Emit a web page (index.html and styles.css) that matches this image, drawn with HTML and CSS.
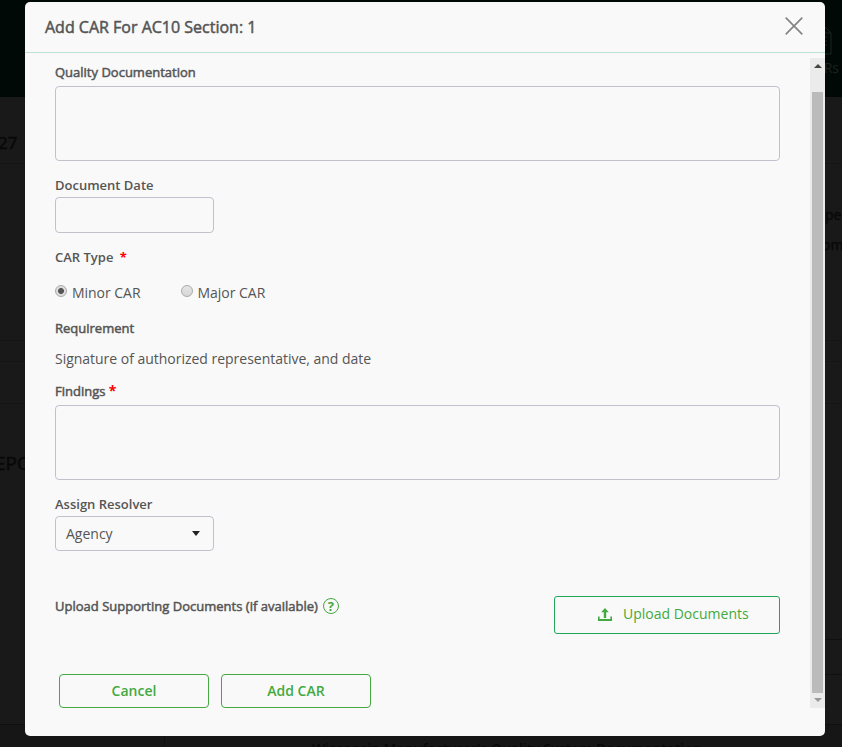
FILE: index.html
```html
<!DOCTYPE html>
<html lang="en">
<head>
<meta charset="utf-8">
<title>Add CAR</title>
<link rel="stylesheet" href="styles.css">
</head>
<body>
<div class="page">
  <header class="topbar">
    <svg class="doc-icon" width="26" height="32" viewBox="0 0 26 32"><path d="M1 1h15l9 9v21H1zM16 1v9h9M17 14h4M17 18h4M17 22h4"/></svg>
    <span class="nav-label">CARs</span>
  </header>
  <section class="strip strip-number"><span>27</span></section>
  <section class="strip strip-details"><span>pe</span><span>om</span></section>
  <section class="strip strip-gap"></section>
  <section class="strip strip-gap-wide"></section>
  <section class="strip strip-report"><span>EPO</span></section>
  <footer class="bottom"><div class="bottom-cell"></div><span>Wisconsin Manufacturer's Quality System Documentation</span></footer>
  <div class="side-lines"></div>
</div>
<div class="modal" role="dialog" aria-labelledby="title">
  <header class="modal-head">
    <h1 id="title" class="thick">Add CAR For AC10 Section: 1</h1>
    <svg class="close" width="18" height="18" viewBox="0 0 18 18"><path d="M.7.7l16.6 16.6M17.3.7L.7 17.3"/></svg>
  </header>
  <div class="modal-body">
    <form class="form">
      <div class="field">
        <label class="label thick">Quality Documentation</label>
        <div class="textarea"></div>
      </div>
      <div class="field field-date">
        <label class="label semi">Document Date</label>
        <div class="input"></div>
      </div>
      <div class="field field-type">
        <div class="label semi">CAR Type <b class="required">*</b></div>
        <div class="radios">
          <label class="option"><i class="radio checked"></i><span>Minor CAR</span></label>
          <label class="option"><i class="radio"></i><span>Major CAR</span></label>
        </div>
      </div>
      <div class="field field-requirement">
        <div class="label thick">Requirement</div>
        <p class="text">Signature of authorized representative, and date</p>
      </div>
      <div class="field field-findings">
        <label class="label thick">Findings <b class="required">*</b></label>
        <div class="textarea"></div>
      </div>
      <div class="field field-resolver">
        <label class="label semi">Assign Resolver</label>
        <div class="select"><span>Agency</span><i class="caret"></i></div>
      </div>
      <div class="upload-row">
        <div class="upload-label"><span class="thick">Upload Supporting Documents (if available)</span><i class="help">?</i></div>
        <div class="upload-button">
          <svg width="14" height="13" viewBox="0 0 14 13"><path d="M7 0l3.800 4.300H8.200V10H5.800V4.300H3.200zM0 8.500h1.600v2.500h10.800V8.500H14V13H0z"/></svg>
          <span>Upload Documents</span>
        </div>
      </div>
      <div class="actions">
        <div class="button">Cancel</div>
        <div class="button">Add CAR</div>
      </div>
    </form>
    <div class="scrollbar"><i class="arrow up"></i><div class="thumb"></div><i class="arrow down"></i></div>
  </div>
</div>
</body>
</html>
```
FILE: styles.css
```css
* { box-sizing: border-box; }
body {
  margin: 0;
  width: 842px;
  height: 747px;
  overflow: hidden;
  background: #191919;
  color: #555;
  font: 14px/20px "Open Sans", "Noto Sans", sans-serif;
}

/* dimmed page */
.page { height: 747px; overflow: hidden; color: #080808; position: relative; }
.topbar {
  height: 97px;
  padding: 23px 3px 0 0;
  background: #000906;
  display: flex;
  flex-direction: column;
  align-items: flex-end;
  gap: 3px;
  color: #1d2120;
}
.doc-icon { fill: none; stroke: #1d2522; margin-right: 7px; }
.nav-label { font-size: 14px; }
.strip { border-bottom: 1px solid #151515; overflow: hidden; }
.strip-number { height: 67px; padding-top: 35px; font-size: 17px; line-height: 22px; -webkit-text-stroke: .5px currentColor; }
.strip-number span { margin-left: -2px; }
.strip-details {
  height: 177px;
  padding: 41px 0 0 825px;
  display: flex;
  flex-direction: column;
  gap: 10px;
  -webkit-text-stroke: .4px currentColor;
}
.strip-details span:last-child { margin-left: -3px; }
.strip-gap { height: 21px; }
.strip-gap-wide { height: 42px; }
.strip-report {
  height: 321px;
  padding-top: 47px;
  border-color: #0f0f0f;
  font-size: 19px;
  line-height: 24px;
  -webkit-text-stroke: .5px currentColor;
}
.strip-report span { margin-left: -5px; }
.bottom { height: 22px; display: flex; background: #161616; overflow: hidden; font: 600 14px/20px "Open Sans", sans-serif; }
.bottom-cell { width: 165px; border-right: 1px solid #101010; flex: none; }
.bottom span { margin: 14px 0 0 147px; white-space: nowrap; }
.side-lines {
  position: absolute;
  left: 825px;
  top: 639px;
  width: 17px;
  height: 36px;
  border: solid #101010;
  border-width: 1px 0;
}

/* dialog */
.modal {
  position: absolute;
  left: 25px;
  top: 2px;
  width: 800px;
  height: 734px;
  border-radius: 5px;
  background: #f9f9f9;
  overflow: hidden;
}
.modal-head {
  height: 51px;
  padding: 0 22px 2px 20px;
  border-bottom: 1px solid #bcdfd7;
  display: flex;
  align-items: center;
  justify-content: space-between;
}
h1 { margin: 1px 0 0; padding-top: 1px; font-size: 16px; font-weight: 400; line-height: 22px; }
.close { fill: none; stroke: #858585; stroke-width: 1.700; }
.thick { -webkit-text-stroke: .5px currentColor; }
.semi { font-weight: 600; }

.modal-body { display: flex; justify-content: space-between; }
.form { width: 725px; margin-left: 30px; padding-top: 10px; }
.field { display: flex; flex-direction: column; }
.label { height: 18px; line-height: 18px; font-size: 13px; margin-bottom: 5px; }
.textarea, .input, .select { border: 1px solid #bfc2cd; border-radius: 4px; }
.textarea { height: 75px; }
.input { width: 159px; height: 36px; }
.field-date { margin-top: 15px; }
.field-date .label, .field-resolver .label { margin-bottom: 3px; }
.field-type { margin-top: 15px; }
.required { color: #f00; font-weight: 700; margin-left: 3px; -webkit-text-stroke: 0; }
.field-findings .required { margin-left: 0; font-size: 14px; }
.radios { display: flex; gap: 40px; margin-top: 12px; height: 20px; }
.option { display: flex; gap: 5px; letter-spacing: -.03px; }
.radio {
  width: 12px;
  height: 12px;
  margin-top: 2px;
  border: 1px solid #aaa;
  border-radius: 50%;
  background: linear-gradient(#e5e5e5, #d6d6d6);
}
.radio.checked { background: radial-gradient(circle, #555 0 2.600px, #ddd 3.300px); }
.field-requirement { margin-top: 16px; }
.text { margin: 7px 0 0; letter-spacing: -.02px; }
.field-findings { margin-top: 13px; }
.field-resolver { margin-top: 15px; }
.select {
  width: 159px;
  height: 35px;
  padding: 0 13px 0 10px;
  display: flex;
  align-items: center;
  justify-content: space-between;
}
.caret { border: 4px solid transparent; border-top: 5px solid #222; border-bottom: 0; }

.upload-row { margin-top: 45px; height: 38px; display: flex; justify-content: space-between; }
.upload-label { display: flex; gap: 5px; font-size: 13px; letter-spacing: .01px; }
.help {
  width: 16px;
  height: 16px;
  margin-top: 2px;
  border: 1px solid #43a940;
  border-radius: 50%;
  color: #43a940;
  font: 700 13px/14px "Open Sans", sans-serif;
  text-align: center;
}
.upload-button {
  width: 226px;
  border: 1px solid #22a65a;
  border-radius: 3px;
  padding: 7px 0 0 43px;
  display: flex;
  gap: 11px;
  color: #43a940;
}
.upload-button svg { margin-top: 4px; fill: currentColor; }
.actions { display: flex; gap: 12px; margin: 40px 0 0 4px; }
.button {
  width: 150px;
  height: 34px;
  border: 1px solid #43a940;
  border-radius: 4px;
  color: #43a940;
  font-weight: 600;
  line-height: 32px;
  text-align: center;
}

.scrollbar {
  width: 15px;
  height: 650px;
  margin-top: 5px;
  padding: 6px 2px 5px;
  background: #ebebeb;
  display: flex;
  flex-direction: column;
  align-items: center;
}
.thumb { width: 11px; height: 601px; margin: 24px 0 5px; background: #bbb; flex: none; }
.arrow { border: 4px solid transparent; }
.up { border-top: 0; border-bottom-color: #444; }
.down { border-bottom: 0; border-top-color: #999; }
```
